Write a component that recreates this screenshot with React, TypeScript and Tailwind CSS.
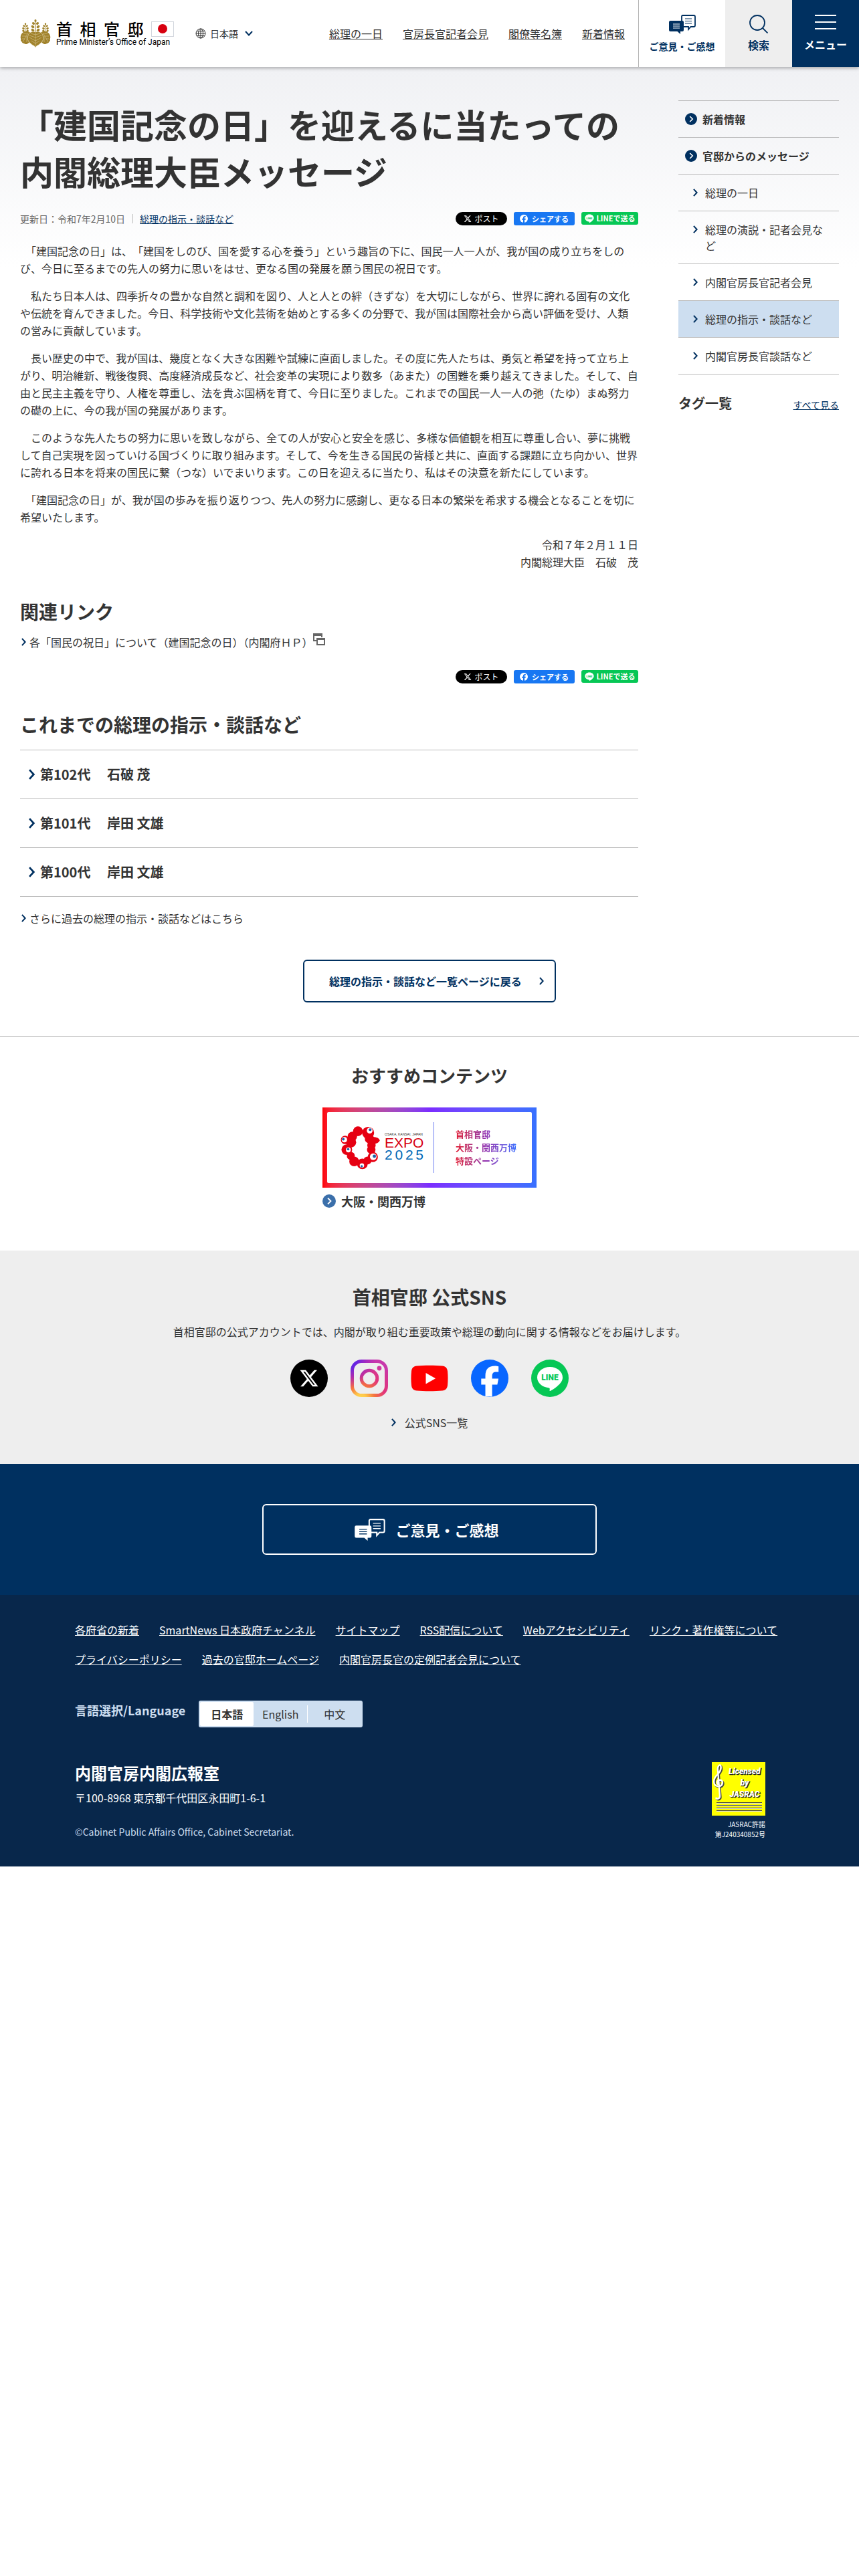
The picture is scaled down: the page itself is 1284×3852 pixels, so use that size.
import type { ReactNode } from "react";

const navLinks = ["総理の一日", "官房長官記者会見", "閣僚等名簿", "新着情報"];

const paragraphs = [
  "「建国記念の日」は、「建国をしのび、国を愛する心を養う」という趣旨の下に、国民一人一人が、我が国の成り立ちをしのび、今日に至るまでの先人の努力に思いをはせ、更なる国の発展を願う国民の祝日です。",
  "私たち日本人は、四季折々の豊かな自然と調和を図り、人と人との絆（きずな）を大切にしながら、世界に誇れる固有の文化や伝統を育んできました。今日、科学技術や文化芸術を始めとする多くの分野で、我が国は国際社会から高い評価を受け、人類の営みに貢献しています。",
  "長い歴史の中で、我が国は、幾度となく大きな困難や試練に直面しました。その度に先人たちは、勇気と希望を持って立ち上がり、明治維新、戦後復興、高度経済成長など、社会変革の実現により数多（あまた）の国難を乗り越えてきました。そして、自由と民主主義を守り、人権を尊重し、法を貴ぶ国柄を育て、今日に至りました。これまでの国民一人一人の弛（たゆ）まぬ努力の礎の上に、今の我が国の発展があります。",
  "このような先人たちの努力に思いを致しながら、全ての人が安心と安全を感じ、多様な価値観を相互に尊重し合い、夢に挑戦して自己実現を図っていける国づくりに取り組みます。そして、今を生きる国民の皆様と共に、直面する課題に立ち向かい、世界に誇れる日本を将来の国民に繋（つな）いでまいります。この日を迎えるに当たり、私はその決意を新たにしています。",
  "「建国記念の日」が、我が国の歩みを振り返りつつ、先人の努力に感謝し、更なる日本の繁栄を希求する機会となることを切に希望いたします。",
];

const pastCabinets = ["第102代　 石破 茂", "第101代　 岸田 文雄", "第100代　 岸田 文雄"];

const sideLinks = [
  { label: "総理の一日", active: false },
  { label: "総理の演説・記者会見など", active: false },
  { label: "内閣官房長官記者会見", active: false },
  { label: "総理の指示・談話など", active: true },
  { label: "内閣官房長官談話など", active: false },
];

const footerLinks = [
  "各府省の新着",
  "SmartNews 日本政府チャンネル",
  "サイトマップ",
  "RSS配信について",
  "Webアクセシビリティ",
  "リンク・著作権等について",
  "プライバシーポリシー",
  "過去の官邸ホームページ",
  "内閣官房長官の定例記者会見について",
];

const X_PATH =
  "M18.244 2.25h3.308l-7.227 8.26 8.502 11.24H16.17l-5.214-6.817L4.99 21.75H1.68l7.73-8.835L1.254 2.25H8.08l4.713 6.231zm-1.161 17.52h1.833L7.084 4.126H5.117z";

function Chevron({ className }: { className: string }) {
  return (
    <svg viewBox="0 0 8 14" className={className} fill="none" stroke="currentColor" strokeWidth="2.400" aria-hidden="true">
      <path d="M1 1l5.500 6L1 13" />
    </svg>
  );
}

function CircleChevron({ className }: { className: string }) {
  return (
    <svg viewBox="0 0 20 20" className={className} aria-hidden="true">
      <circle cx="10" cy="10" r="10" fill="currentColor" />
      <path d="M8 5.500l4.500 4.500L8 14.500" fill="none" stroke="#fff" strokeWidth="1.800" />
    </svg>
  );
}

function SpeechIcon({ className, lines }: { className: string; lines: string }) {
  return (
    <svg viewBox="0 0 40 29" className={className} aria-hidden="true">
      <path
        d="M20.500 1H37a2 2 0 0 1 2 2v13a2 2 0 0 1-2 2h-4.500l-3.500 4v-4h-10V2.500A1.500 1.500 0 0 1 20.500 1z"
        fill={lines}
        stroke="currentColor"
        strokeWidth="1.800"
      />
      <path d="M24 6h10M24 9.500h10M24 13h10" stroke="currentColor" strokeWidth="1.200" />
      <path d="M2 9h18a2 2 0 0 1 2 2v12a2 2 0 0 1-2 2h-3v4l-4.500-4H2a2 2 0 0 1-2-2V11a2 2 0 0 1 2-2z" fill="currentColor" />
      <path d="M6 14h10M6 17h10M6 20h10" stroke={lines} strokeWidth="1.200" />
    </svg>
  );
}

function FlowerStalk({ x, y, s }: { x: number; y: number; s: number }) {
  return (
    <g transform={`translate(${x} ${y}) scale(${s})`}>
      <path d="M0 0v20" stroke="currentColor" strokeWidth="1" />
      <ellipse cx="0" cy="1" rx="1.600" ry="2" />
      <ellipse cx="-3" cy="5" rx="2.200" ry="1.700" transform="rotate(35 -3 5)" />
      <ellipse cx="3" cy="5" rx="2.200" ry="1.700" transform="rotate(-35 3 5)" />
      <ellipse cx="-4" cy="10" rx="2.600" ry="1.900" transform="rotate(35 -4 10)" />
      <ellipse cx="4" cy="10" rx="2.600" ry="1.900" transform="rotate(-35 4 10)" />
      <ellipse cx="-4" cy="15" rx="2.600" ry="1.900" transform="rotate(35 -4 15)" />
      <ellipse cx="4" cy="15" rx="2.600" ry="1.900" transform="rotate(-35 4 15)" />
    </g>
  );
}

function Crest() {
  return (
    <svg viewBox="0 0 46 42" className="h-[42px] w-[46px] shrink-0 text-[#a1832c]" fill="currentColor" aria-hidden="true">
      <FlowerStalk x={23} y={1} s={1} />
      <FlowerStalk x={8} y={6} s={0.75} />
      <FlowerStalk x={38} y={6} s={0.75} />
      <path d="M14 19C9 16 2 19 1 25c-1 3 1 4 0 7 2 1 2 4 5 4 2 2 5 1 7-1l6-12z" />
      <path d="M32 19c5-3 12 0 13 6 1 3-1 4 0 7-2 1-2 4-5 4-2 2-5 1-7-1l-6-12z" />
      <path d="M23 19c-5-2-10 1-11 5-1 3 0 4-1 6 2 2 2 5 5 6 2 3 5 2 7 6 2-4 5-3 7-6 3-1 3-4 5-6-1-2 0-3-1-6-1-4-6-7-11-5z" stroke="#efe6c8" strokeWidth=".6" />
      <g fill="none" stroke="#efe6c8" strokeWidth=".4">
        <path d="M23 20v20M23 23l-7-2M23 23l7-2M23 27l-9-3M23 27l9-3M23 32l-9-5M23 32l9-5M23 36l-6-4M23 36l6-4" />
        <path d="M12 20L4 34M11 22l-6-1M9 25l-6 0M7 29l-4 0M10 25l0 9M34 20l8 14M35 22l6-1M37 25l6 0M39 29l4 0M36 25l0 9" />
      </g>
    </svg>
  );
}

function LineBubble({ fill, text }: { fill: string; text: string }) {
  return (
    <>
      <path d="M28 11c10.500 0 19 7 19 15.800 0 6-4.500 10.200-9 14-3.500 2.700-7 5-9.500 6.200-1.200.5-1-.8-.8-2 .3-2-.2-2.500-1.700-2.700C16 41 9 34.800 9 26.800 9 18 17.500 11 28 11z" fill={fill} />
      <text x="28" y="31" textAnchor="middle" fontSize="12" fontWeight="900" fontFamily="Roboto, sans-serif" fill={text}>
        LINE
      </text>
    </>
  );
}

function ShareButtons() {
  return (
    <div className="flex items-start gap-[10px] text-white">
      <button type="button" className="flex h-5 w-[77px] items-center justify-center gap-1 rounded-full bg-black text-xs leading-5">
        <svg viewBox="0 0 24 24" className="h-3 w-3" fill="currentColor" aria-hidden="true">
          <path d={X_PATH} />
        </svg>
        ポスト
      </button>
      <button type="button" className="flex h-5 w-[91px] items-center justify-center gap-[6px] rounded-[3px] bg-[#1877f2] text-[11px] leading-5 font-bold">
        <svg viewBox="0 0 56 56" className="h-3 w-3" aria-hidden="true">
          <circle cx="28" cy="28" r="28" fill="#fff" />
          <path d="M23 56V36h-8v-9h8v-6c0-8 5-12 12-12h6v9h-4c-3 0-4 2-4 4v5h8l-1 9h-7v20z" fill="#1877f2" />
        </svg>
        シェアする
      </button>
      <button type="button" className="flex h-[19px] w-[85px] items-center justify-center gap-1 rounded-[3px] bg-[#06c755] text-[11px] leading-[19px] font-bold">
        <svg viewBox="8 10 40 39" className="h-[14px] w-[14px] shrink-0" aria-hidden="true">
          <LineBubble fill="#fff" text="#06c755" />
        </svg>
        LINEで送る
      </button>
    </div>
  );
}

function Header() {
  return (
    <header className="relative z-10 flex h-[100px] bg-white shadow-[0_2px_5px_rgba(0,0,0,0.3)]">
      <div className="flex flex-1 items-center pr-5 pl-[30px]">
        <a href="#" className="flex items-center gap-2">
          <Crest />
          <span className="flex w-44 flex-col">
            <span className="flex items-center justify-between text-2xl leading-[26px] font-medium text-black">
              <span>首</span>
              <span>相</span>
              <span>官</span>
              <span>邸</span>
              <span className="flex h-[23px] w-[34px] items-center justify-center border border-gray-300 bg-white">
                <span className="h-[14px] w-[14px] rounded-full bg-[#d7000f]" />
              </span>
            </span>
            <span className="font-[Roboto,sans-serif] text-xs leading-[14px] whitespace-nowrap text-black">Prime Minister’s Office of Japan</span>
          </span>
        </a>
        <button type="button" className="ml-8 flex items-center text-sm leading-5">
          <svg viewBox="0 0 16 16" className="mr-[6px] h-4 w-4" fill="none" stroke="currentColor" aria-hidden="true">
            <circle cx="8" cy="8" r="7" />
            <ellipse cx="8" cy="8" rx="3.500" ry="7" />
            <path d="M8 1v14M1 8h14M2 4.500h12M2 11.500h12" />
          </svg>
          日本語
          <svg viewBox="0 0 12 8" className="ml-[10px] h-2 w-3 text-[#003060]" fill="none" stroke="currentColor" strokeWidth="2" aria-hidden="true">
            <path d="M1 1l5 5.500L11 1" />
          </svg>
        </button>
        <nav className="ml-auto flex gap-[30px] text-base leading-6 underline">
          {navLinks.map((label) => (
            <a key={label} href="#">{label}</a>
          ))}
        </nav>
      </div>
      <a href="#" className="flex w-[130px] flex-col items-center border-l border-[#b3b3b3] pt-[22px] text-sm leading-5 font-bold text-[#003060]">
        <SpeechIcon className="mb-2 h-[29px] w-10" lines="#fff" />
        ご意見・ご感想
      </a>
      <button type="button" className="flex w-[100px] flex-col items-center bg-[#eee] pt-[22px] text-base leading-5 font-bold text-[#003060]">
        <svg viewBox="0 0 28 28" className="mb-[7px] h-7 w-7" fill="none" stroke="currentColor" strokeWidth="1.800" aria-hidden="true">
          <circle cx="12" cy="12" r="11" />
          <path d="M19.500 19.500l8 8" />
        </svg>
        検索
      </button>
      <button type="button" className="flex w-[100px] flex-col items-center bg-[#003060] pt-[22px] text-base leading-5 font-bold text-white">
        <span className="mb-3 flex flex-col gap-2">
          <span className="h-[2px] w-8 bg-white" />
          <span className="h-[2px] w-8 bg-white" />
          <span className="h-[2px] w-8 bg-white" />
        </span>
        メニュー
      </button>
    </header>
  );
}

function Sidebar() {
  return (
    <aside className="w-60 shrink-0">
      <ul className="border-t border-[#bbb] text-base leading-6">
        {["新着情報", "官邸からのメッセージ"].map((label) => (
          <li key={label} className="border-b border-[#bbb]">
            <a href="#" className="flex items-center gap-2 px-[10px] py-[15px] font-bold">
              <CircleChevron className="h-[18px] w-[18px] text-[#003060]" />
              {label}
            </a>
          </li>
        ))}
        {sideLinks.map(({ label, active }) => (
          <li key={label} className={active ? "border-b border-[#bbb] bg-[#cddef0]" : "border-b border-[#bbb]"}>
            <a href="#" className="flex gap-[11px] py-[15px] pr-5 pl-[22px]">
              <Chevron className="mt-[6px] h-3 w-[7px] shrink-0 text-[#003060]" />
              <span>{label}</span>
            </a>
          </li>
        ))}
      </ul>
      <div className="mt-[27px] flex items-end justify-between">
        <h2 className="text-xl leading-8 font-bold">タグ一覧</h2>
        <a href="#" className="text-sm leading-7 text-[#003060] underline">すべて見る</a>
      </div>
    </aside>
  );
}

function Article() {
  return (
    <article className="min-w-0 flex-1">
      <h1 className="text-[50px] leading-[70px] font-bold">「建国記念の日」を迎えるに当たっての内閣総理大臣メッセージ</h1>
      <div className="mt-[27px] flex items-center justify-between">
        <div className="flex items-center text-sm leading-5">
          <p className="text-[#666]">更新日：令和7年2月10日</p>
          <a href="#" className="ml-[11px] flex items-center text-[#003060] underline before:mr-[10px] before:h-[14px] before:w-px before:bg-[#bbb]">
            総理の指示・談話など
          </a>
        </div>
        <ShareButtons />
      </div>
      <div className="mt-[25px] space-y-[15px] text-base leading-[26px]">
        {/* an opening bracket carries half an em of space of its own */}
        {paragraphs.map((text) => (
          <p key={text} className={text.startsWith("「") ? "indent-2 [text-spacing-trim:space-all]" : "indent-4"}>
            {text}
          </p>
        ))}
        <p className="text-right">
          令和７年２月１１日
          <br />
          内閣総理大臣　石破　茂
        </p>
      </div>

      <h2 className="mt-[41px] text-[28px] leading-10 font-bold">関連リンク</h2>
      <a href="#" className="mt-[13px] flex items-center pl-[2px] text-base leading-[26px]">
        <Chevron className="mr-[5px] h-3 w-[7px] text-[#003060]" />
        各「国民の祝日」について（建国記念の日）（内閣府ＨＰ）
        <svg viewBox="0 0 18 18" className="mb-2 h-[18px] w-[18px]" fill="none" stroke="#666" strokeWidth="2" aria-hidden="true">
          <path d="M6 11H1V1h12v5" />
          <path d="M1 2.500h12M6 8.500h11" strokeWidth="3" />
          <path d="M6 8h11v9H6z" />
        </svg>
      </a>
      <div className="mt-[29px] flex justify-end">
        <ShareButtons />
      </div>

      <h2 className="mt-[41px] text-[28px] leading-10 font-bold">これまでの総理の指示・談話など</h2>
      <ul className="mt-[18px] border-t border-[#bbb]">
        {pastCabinets.map((label) => (
          <li key={label} className="border-b border-[#bbb]">
            <a href="#" className="flex items-center gap-[7px] px-3 py-5 text-xl leading-8 font-bold">
              <Chevron className="h-4 w-[11px] text-[#003060]" />
              {label}
            </a>
          </li>
        ))}
      </ul>
      <a href="#" className="mt-[19px] flex items-center pl-[2px] text-base leading-[26px]">
        <Chevron className="mr-[5px] h-3 w-[7px] text-[#003060]" />
        さらに過去の総理の指示・談話などはこちら
      </a>
    </article>
  );
}

function ExpoMark() {
  const eye = (cx: number, cy: number, px: number, py: number, r: number) => (
    <g key={`${cx}-${cy}`}>
      <circle cx={cx} cy={cy} r={r} fill="#fff" />
      <circle cx={px} cy={py} r={r * 0.5} fill="#1d5fa8" />
    </g>
  );
  return (
    <svg viewBox="148 130 180 196" className="h-[65px] w-[60px] shrink-0" aria-hidden="true">
      <g fill="#e60012">
        <circle cx="226" cy="153" r="22" />
        <circle cx="272" cy="160" r="27" />
        <circle cx="201" cy="176" r="21" />
        <circle cx="168" cy="192" r="19" />
        <circle cx="195" cy="203" r="23" />
        <circle cx="176" cy="236" r="24" />
        <circle cx="194" cy="264" r="18" />
        <circle cx="209" cy="289" r="22" />
        <circle cx="246" cy="300" r="24" />
        <circle cx="269" cy="285" r="18" />
        <circle cx="293" cy="269" r="23" />
        <circle cx="286" cy="236" r="19" />
        <circle cx="287" cy="216" r="19" />
        <ellipse cx="293" cy="194" rx="31" ry="16" />
        <circle cx="278" cy="187" r="21" />
      </g>
      {eye(279, 150, 281, 146, 13)}
      {eye(165, 191, 160, 189, 12)}
      {eye(183, 237, 182, 234, 11)}
      {eye(295, 268, 300, 266, 15)}
      {eye(244, 307, 243, 311, 10)}
    </svg>
  );
}

function Recommended() {
  return (
    <section className="flex flex-col items-center border-t border-[#b3b3b3] pt-[38px] pb-[59px]">
      <h2 className="text-[26px] leading-10 font-bold">おすすめコンテンツ</h2>
      <a href="#" className="mt-7 block w-80">
        <span className="block bg-linear-to-r from-[#ff0000] via-[#7b2cff] to-[#3670ff] p-[7px]">
          <span className="flex h-[106px] items-center rounded-[2px] bg-white pl-5">
            <ExpoMark />
            <span className="mb-1 ml-[6px] flex w-[58px] flex-col font-['Liberation_Sans',sans-serif]">
              <span className="text-[5px] leading-2 whitespace-nowrap text-[#333]">OSAKA, KANSAI, JAPAN</span>
              <span className="text-[21px] leading-[18px] text-[#d7000f]">EXPO</span>
              <span className="flex justify-between text-[21px] leading-[18px] text-[#0068b7]">
                <span>2</span>
                <span>0</span>
                <span>2</span>
                <span>5</span>
              </span>
            </span>
            <span className="ml-[15px] h-[76px] w-px bg-[#6c7df0]" />
            <span className="ml-8 bg-linear-to-r from-[#e0102c] via-[#9030b0] to-[#3670ff] bg-clip-text text-[13px] leading-5 font-bold text-transparent">
              首相官邸
              <br />
              大阪・関西万博
              <br />
              特設ページ
            </span>
          </span>
        </span>
        <span className="mt-[5px] flex items-center gap-2 text-lg leading-[30px] font-bold">
          <CircleChevron className="h-5 w-5 text-[#3b6faa]" />
          大阪・関西万博
        </span>
      </a>
    </section>
  );
}

function SnsLink({ label, children }: { label: string; children: ReactNode }) {
  return (
    <a href="#" aria-label={label}>
      <svg viewBox="0 0 56 56" className="h-14 w-14">
        {children}
      </svg>
    </a>
  );
}

function Sns() {
  return (
    <section className="flex flex-col items-center bg-[#eee] pt-[49px] pb-[49px]">
      <h2 className="text-[28px] leading-10 font-bold">首相官邸 公式SNS</h2>
      <p className="mt-[19px] text-base leading-[26px]">
        首相官邸の公式アカウントでは、内閣が取り組む重要政策や総理の動向に関する情報などをお届けします。
      </p>
      <div className="mt-[29px] flex gap-[34px]">
        <SnsLink label="X">
          <circle cx="28" cy="28" r="28" />
          <path d={X_PATH} fill="#fff" transform="translate(13 13) scale(1.25)" />
        </SnsLink>
        <SnsLink label="Instagram">
          <defs>
            <radialGradient id="ig-warm" cx="27%" cy="108%" r="110%">
              <stop offset="0" stopColor="#ffdd55" />
              <stop offset=".15" stopColor="#ffc94a" />
              <stop offset=".35" stopColor="#f4733f" />
              <stop offset=".6" stopColor="#e2357a" />
              <stop offset="1" stopColor="#c837ab" />
            </radialGradient>
            <radialGradient id="ig-cool" cx="-5%" cy="0%" r="75%">
              <stop offset="0" stopColor="#4a2be8" />
              <stop offset=".3" stopColor="#6a25e0" />
              <stop offset="1" stopColor="#9a20d0" stopOpacity="0" />
            </radialGradient>
            <mask id="ig-shape">
              <rect x="2.500" y="2.500" width="51" height="51" rx="14" fill="none" stroke="#fff" strokeWidth="5" />
              <circle cx="28" cy="28" r="11.800" fill="none" stroke="#fff" strokeWidth="5" />
              <circle cx="43" cy="13" r="3.400" fill="#fff" />
            </mask>
          </defs>
          <g mask="url(#ig-shape)">
            <rect width="56" height="56" fill="url(#ig-warm)" />
            <rect width="56" height="56" fill="url(#ig-cool)" />
          </g>
        </SnsLink>
        <SnsLink label="YouTube">
          <path d="M9 9.500c10-1 28-1 38 0 5 .5 7.500 3 8 8 .7 7 .7 14 0 21-.5 5-3 7.500-8 8-10 1-28 1-38 0-5-.5-7.500-3-8-8-.7-7-.7-14 0-21 .5-5 3-7.500 8-8z" fill="#f00" />
          <path d="M22.500 20v16.500L37 28.200z" fill="#fff" />
        </SnsLink>
        <SnsLink label="Facebook">
          <circle cx="28" cy="28" r="28" fill="#0866ff" />
          <path d="M21.500 55.200V37.600h-6.200v-9h6.200v-4c0-10 4.600-15 14.400-15 1.800 0 4 .3 5.300.6v8.400c-.8-.1-2-.1-3-.1-5 0-6.600 1.800-6.600 6.500v3.600h9.500l-1.700 9h-7.800v18z" fill="#fff" />
        </SnsLink>
        <SnsLink label="LINE">
          <circle cx="28" cy="28" r="28" fill="#06c755" />
          <LineBubble fill="#fff" text="#06c755" />
        </SnsLink>
      </div>
      <a href="#" className="mt-[25px] flex items-center gap-[13px] text-base leading-[26px]">
        <Chevron className="h-3 w-[7px] text-[#003060]" />
        公式SNS一覧
      </a>
    </section>
  );
}

function JasracMark() {
  const clef =
    "M6 53c1 3 6 2 6-2L9 12c-1-6 3-9 4-7 2 5-1 10-5 14-4 4-6 9-4 14 3 5 11 4 12-2 0-5-7-6-8-1 0 2 1 3 2 3";
  return (
    <svg viewBox="0 0 80 80" className="h-20 w-20" role="img" aria-label="Licensed by JASRAC">
      <rect width="80" height="80" fill="#ff0" />
      <g fill="none" strokeWidth="2.400">
        <path d={clef} stroke="#444" transform="translate(1.500 1.500)" />
        <path d={clef} stroke="#fff" />
      </g>
      <g fontFamily="Roboto, Arial, sans-serif" fontSize="12" fontWeight="900" fontStyle="italic" textAnchor="middle" aria-hidden="true">
        <g fill="#222" stroke="#222" strokeWidth=".6" transform="translate(1.200 1.200)">
          <text x="49" y="18">Licensed</text>
          <text x="49" y="35">by</text>
          <text x="49" y="52">JASRAC</text>
        </g>
        <g fill="#fff">
          <text x="49" y="18">Licensed</text>
          <text x="49" y="35">by</text>
          <text x="49" y="52">JASRAC</text>
        </g>
      </g>
      <path d="M7 60.500h68M7 64.500h68M7 68.500h68M7 72.500h68" stroke="#444" />
      <path d="M7 61.500h68M7 65.500h68M7 69.500h68M7 73.500h68" stroke="#ddd" />
    </svg>
  );
}

function Footer() {
  return (
    <footer className="bg-[#08274b] pt-[39px] pb-[41px] text-white">
      <div className="mx-auto max-w-[1060px]">
        <ul className="flex flex-wrap gap-x-[30px] gap-y-[18px] text-base leading-[26px] underline">
          {footerLinks.map((label) => (
            <li key={label}>
              <a href="#">{label}</a>
            </li>
          ))}
        </ul>
        <div className="mt-[49px] flex items-start gap-5">
          <h2 className="text-lg leading-7 font-bold text-[#cddef0]">言語選択/Language</h2>
          <div className="flex h-10 items-center rounded-[3px] bg-[#cddef0] p-[2px] text-center text-base leading-9 text-[#333]">
            <a href="#" className="w-20 rounded-[2px] bg-white font-bold">日本語</a>
            <a href="#" className="w-20">English</a>
            <span className="h-[26px] w-px bg-white" />
            <a href="#" className="w-20">中文</a>
          </div>
        </div>
        <div className="mt-[52px] flex justify-between pr-7">
          <div>
            <p className="text-2xl leading-8 font-bold">内閣官房内閣広報室</p>
            <p className="mt-2 text-base leading-[26px]">〒100-8968 東京都千代田区永田町1-6-1</p>
            <p className="mt-7 text-sm leading-5 text-[#cddef0]">©Cabinet Public Affairs Office, Cabinet Secretariat.</p>
          </div>
          <div className="flex flex-col items-end text-right text-[10px] leading-[15px]">
            <JasracMark />
            <p className="mt-[5px]">
              JASRAC許諾
              <br />
              第J240340852号
            </p>
          </div>
        </div>
      </div>
    </footer>
  );
}

export default function App() {
  return (
    <div lang="ja" className="bg-white font-['Noto_Sans_CJK_JP',sans-serif] text-[#333]">
      <Header />
      <main>
        <div className="bg-linear-to-b from-[#f0f1f4] to-white to-[300px]">
          <div className="flex gap-[60px] px-[30px] pt-[50px]">
            <Article />
            <Sidebar />
          </div>
          <div className="flex justify-center pt-[49px] pb-[50px]">
            <a href="#" className="flex h-16 w-[378px] items-center justify-between rounded-md border-2 border-[#003060] bg-white pr-4 pl-[37px] text-base leading-6 font-bold text-[#003060]">
              総理の指示・談話など一覧ページに戻る
              <Chevron className="h-3 w-[7px]" />
            </a>
          </div>
        </div>
        <Recommended />
        <Sns />
        <section className="flex justify-center bg-[#003060] py-[60px]">
          <a href="#" className="flex h-[76px] w-[500px] items-center justify-center gap-[15px] rounded-md border-2 border-white pr-2 text-[22px] leading-8 font-bold text-white">
            <SpeechIcon className="h-[33px] w-[46px]" lines="#003060" />
            ご意見・ご感想
          </a>
        </section>
      </main>
      <Footer />
    </div>
  );
}
